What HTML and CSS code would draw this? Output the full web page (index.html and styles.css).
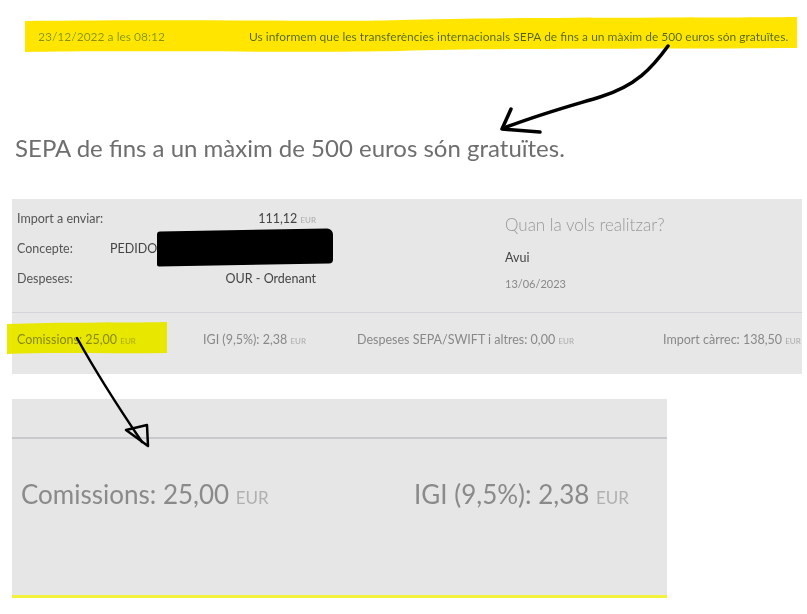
FILE: index.html
```html
<!DOCTYPE html>
<html lang="ca">
<head>
    <meta charset="UTF-8">
    <meta name="viewport" content="width=device-width, initial-scale=1.0">
    <title>Transferència SEPA</title>
    <link rel="stylesheet" href="styles.css">
</head>
<body>
    <div class="sheet">
        <div class="notice">
            <span class="notice-date">23/12/2022 a les 08:12</span>
            <span class="notice-text">Us informem que les transferències internacionals SEPA de fins a un màxim de 500 euros són gratuïtes.</span>
        </div>

        <h1 class="heading">SEPA de fins a un màxim de 500 euros són gratuïtes.</h1>

        <div class="transfer">
            <div class="transfer-top">
                <div class="details">
                    <div class="row">
                        <span class="label">Import a enviar:</span>
                        <span class="value right">111,12 <small>EUR</small></span>
                    </div>
                    <div class="row">
                        <span class="label">Concepte:</span>
                        <span class="value concept">PEDIDO<span class="redacted"></span></span>
                    </div>
                    <div class="row">
                        <span class="label">Despeses:</span>
                        <span class="value right">OUR - Ordenant</span>
                    </div>
                </div>
                <div class="when">
                    <div class="when-title">Quan la vols realitzar?</div>
                    <div class="when-day">Avui</div>
                    <div class="when-date">13/06/2023</div>
                </div>
            </div>
            <div class="totals">
                <span>Comissions: 25,00 <small>EUR</small></span>
                <span>IGI (9,5%): 2,38 <small>EUR</small></span>
                <span>Despeses SEPA/SWIFT i altres: 0,00 <small>EUR</small></span>
                <span>Import càrrec: 138,50 <small>EUR</small></span>
            </div>
        </div>

        <div class="zoomed">
            <div class="zoomed-totals">
                <span>Comissions: 25,00 <small>EUR</small></span>
                <span>IGI (9,5%): 2,38 <small>EUR</small></span>
            </div>
        </div>

        <svg class="marks" width="807" height="614" viewBox="0 0 807 614">
            <path d="M25,21 C200,19 360,22 400,20 C500,17 700,18 797,17 L797,48 C650,49 480,48 400,51 C300,53 120,50 25,52 Z" fill="#ffe500"/>
            <path d="M7,324 C60,322 120,323 167,322 L167,353 C110,354 50,352 7,354 Z" fill="#eaea00"/>
            <path d="M668,46 C652,68 636,86 600,97 C570,106 540,114 504,128" fill="none" stroke="#000" stroke-width="3.5" stroke-linecap="round"/>
            <path d="M511,109 L502,129 L540,132" fill="none" stroke="#000" stroke-width="3.5" stroke-linecap="round" stroke-linejoin="round"/>
            <path d="M77,338 C92,365 108,392 142,442" fill="none" stroke="#000" stroke-width="2.5" stroke-linecap="round"/>
            <path d="M126,430 L147,425 L148,446 Z" fill="none" stroke="#000" stroke-width="2.5" stroke-linejoin="round"/>
        </svg>
    </div>
</body>
</html>
```

FILE: styles.css
```css
* {
    margin: 0;
    padding: 0;
    box-sizing: border-box;
}

body {
    font-family: Lato, "Open Sans", sans-serif;
    background: white;
    color: #555;
}

.sheet {
    position: relative;
    width: 807px;
    height: 614px;
    overflow: hidden;
}

.notice {
    display: flex;
    align-items: center;
    height: 34px;
    margin-top: 19px;
    padding-left: 38px;
    font-size: 12px;
}

.notice-date {
    width: 211px;
    color: #8e8e8e;
}

.notice-text {
    color: #5e5e5e;
}

.heading {
    margin: 80px 0 0 15px;
    font-size: 24px;
    font-weight: normal;
    line-height: 30px;
    color: #6e6e6e;
}

.transfer {
    width: 790px;
    margin: 36px 0 0 12px;
    background: #e7e7e7;
}

.transfer-top {
    display: grid;
    grid-template-columns: 493px 1fr;
    height: 114px;
    border-bottom: 1px solid #d3d3da;
}

.details {
    padding: 4px 0 0 5px;
}

.row {
    display: flex;
    width: 299px;
    height: 30px;
    align-items: center;
    font-size: 12.5px;
}

.label {
    width: 93px;
    color: #555;
}

.value {
    color: #444;
}

.value.right {
    margin-left: auto;
}

.concept {
    position: relative;
}

.redacted {
    position: absolute;
    left: 47px;
    top: -11px;
    width: 176px;
    height: 35px;
    background: #000;
    border-radius: 3px 6px 4px 2px;
    transform: skewY(-1deg);
}

small {
    font-size: 8px;
    color: #aaa;
    text-transform: uppercase;
}

.when {
    padding-top: 15px;
}

.when-title {
    font-size: 17px;
    line-height: 22px;
    color: #999;
    font-weight: 300;
}

.when-day {
    margin-top: 14px;
    font-size: 12.5px;
    color: #444;
}

.when-date {
    margin-top: 12px;
    font-size: 11px;
    color: #888;
}

.totals {
    display: grid;
    grid-template-columns: 186px 154px 306px auto;
    height: 61px;
    padding: 19px 0 0 5px;
    font-size: 12.5px;
    color: #888;
}

.zoomed {
    width: 655px;
    height: 199px;
    margin: 25px 0 0 12px;
    padding-top: 38px;
    background: #e6e6e6;
    border-bottom: 3px solid #f2f23a;
}

.zoomed-totals {
    display: grid;
    grid-template-columns: 393px auto;
    padding: 39px 0 0 9px;
    border-top: 2px solid #c8c8cd;
    font-size: 26px;
    color: #8a8a8a;
}

.zoomed-totals small {
    font-size: 17px;
    color: #b0b0b0;
}

.marks {
    position: absolute;
    top: 0;
    left: 0;
    mix-blend-mode: darken;
    pointer-events: none;
}
```
